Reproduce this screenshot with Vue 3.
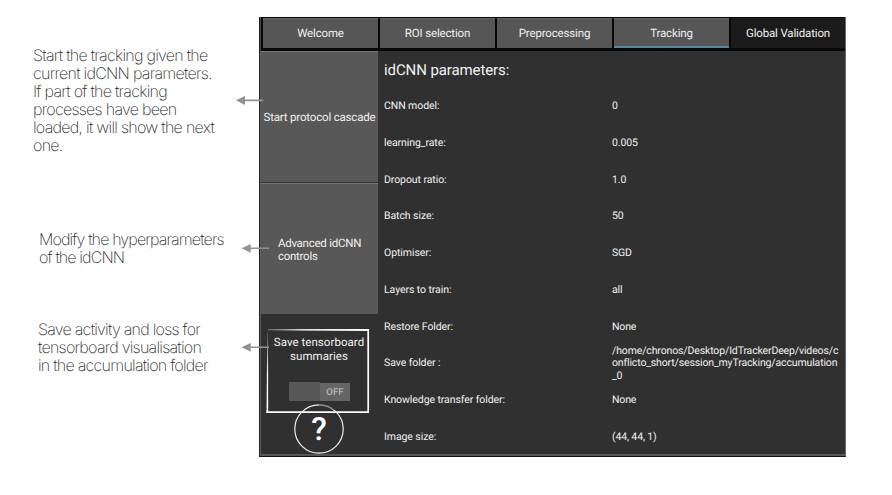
<script setup>
const notes = [
  { id: 'start', lines: ['Start the tracking given the', 'current idCNN parameters.', 'If part of the tracking', 'processes have been', 'loaded, it will show the next', 'one.'] },
  { id: 'modify', lines: ['Modify the hyperparameters', 'of the idCNN'] },
  { id: 'save', lines: ['Save activity and loss for', 'tensorboard visualisation', 'in the accumulation folder'] },
]
const tabs = [
  { label: 'Welcome' },
  { label: 'ROI selection' },
  { label: 'Preprocessing' },
  { label: 'Tracking', state: 'active' },
  { label: 'Global Validation', state: 'down' },
]
const params = [
  ['CNN model:', '0'],
  ['learning_rate:', '0.005'],
  ['Dropout ratio:', '1.0'],
  ['Batch size:', '50'],
  ['Optimiser:', 'SGD'],
  ['Layers to train:', 'all'],
  ['Restore Folder:', 'None'],
  ['Save folder :', '/home/chronos/Desktop/IdTrackerDeep/videos/c\nonflicto_short/session_myTracking/accumulation\n_0'],
  ['Knowledge transfer folder:', 'None'],
  ['Image size:', '(44, 44, 1)'],
]
</script>

<template>
  <div class="page">
    <aside class="notes">
      <p v-for="n in notes" :key="n.id" class="note" :class="n.id">
        <span v-for="l in n.lines" :key="l" class="line">{{ l }}</span>
      </p>
    </aside>

    <main class="window">
      <nav class="tabs">
        <div v-for="t in tabs" :key="t.label" class="tab" :class="t.state">{{ t.label }}</div>
      </nav>
      <div class="body">
        <div class="side">
          <div class="btn first"><span class="cascade">Start protocol cascade</span></div>
          <div class="btn second"><span>Advanced idCNN<br>controls</span></div>
          <div class="summary">
            <div class="caption">Save tensorboard<br>summaries</div>
            <div class="switch"><span class="knob"></span><span class="off">OFF</span></div>
            <svg class="frame" width="106" height="88" viewBox="0 0 106 88">
              <defs>
                <linearGradient id="top" x1="0" x2="1" y1="0" y2="0"><stop offset="0" stop-color="#777" /><stop offset=".35" stop-color="#fff" /></linearGradient>
                <linearGradient id="left" x1="0" x2="0" y1="0" y2="1"><stop offset="0" stop-color="#555" /><stop offset=".5" stop-color="#fff" /></linearGradient>
              </defs>
              <path d="M3 2.2 L104 2 V4 L3 3.2Z" fill="url(#top)" />
              <path d="M2.3 5 L3 5 L3.2 86 L1.5 86Z" fill="url(#left)" />
              <path d="M103.2 2V85.2H1.5" fill="none" stroke="#fff" stroke-width="1.7" />
            </svg>
          </div>
          <div class="help">
            <svg width="52" height="52" viewBox="0 0 52 52">
              <circle cx="26" cy="26" r="24.2" fill="none" stroke="#eee" stroke-width="1.2" />
              <path d="M26 1.8A24.2 24.2 0 0 1 41 7" fill="none" stroke="#303030" stroke-width="1.3" opacity=".55" />
            </svg>
            <span class="mark">?</span>
          </div>
        </div>
        <section class="params">
          <h1>idCNN parameters:</h1>
          <div v-for="p in params" :key="p[0]" class="row">
            <span>{{ p[0] }}</span><span class="value">{{ p[1] }}</span>
          </div>
        </section>
      </div>
    </main>

    <svg class="arrows" width="892" height="495" viewBox="0 0 892 495">
      <g fill="#929292" stroke="none">
        <path d="M236 100.3 245 96V99.6H263.3V101.2H245V105Z" />
        <path d="M241.5 248.3 250.7 244V247.5H269V249.1H250.7V252.7Z" />
        <path d="M241.5 347.3 250.7 343V346.5H269V348.1H250.7V351.7Z" />
      </g>
    </svg>
  </div>
</template>

<style>
body { margin: 0; background: #fff; }
</style>
<style scoped>
.page { position: relative; display: flex; width: 892px; height: 495px; overflow: hidden; background: #fff; text-rendering: geometricPrecision; }
.notes { width: 259px; flex: none; font-family: Inter, "Liberation Sans", sans-serif; font-weight: 200; font-size: 16px; line-height: 18px; color: #2a2a2a; }
.note { margin: 0; letter-spacing: -0.72px; white-space: nowrap; }
.line { display: block; }
.start { padding: 46px 0 0 33px; height: 108px; }
.modify { padding: 76px 0 0 39px; height: 36px; letter-spacing: -0.86px; }
.save { padding: 54px 0 0 38px; letter-spacing: -0.74px; }

.window { box-sizing: border-box; width: 587px; height: 440px; margin-top: 17px; display: flex; flex-direction: column; border-left: 1px solid #202020; border-right: 1px solid #6b6b6b; border-bottom: 1px solid #111; background: #303030; color: #f0f0f0; font-family: Roboto, sans-serif; }
.tabs { box-sizing: border-box; height: 34px; flex: none; display: flex; gap: 2px; padding: 1px 0 3px 2px; background: #080808; border-left: 1px solid #444; }
.tab { box-sizing: border-box; width: 115px; flex: none; display: flex; align-items: center; justify-content: center; background: #565656; border-top: 1px solid #686868; font-size: 11.5px; letter-spacing: -0.16px; padding-bottom: 2px; }
.tab.active { border-bottom: 2px solid #5189a3; padding-bottom: 0; }
.tab.down { background: #1b1b1b; border-top-color: #1b1b1b; width: 114px; }
.body { box-sizing: border-box; flex: 1; min-height: 0; display: flex; border-left: 1px solid #606060; border-bottom: 2px solid #555; }
.side { width: 117px; flex: none; display: flex; flex-direction: column; }
.btn { box-sizing: border-box; height: 131px; flex: none; display: flex; align-items: center; justify-content: center; background: #585858; border-top: 1px solid #747474; font-size: 11.5px; line-height: 13px; letter-spacing: -0.18px; white-space: nowrap; }
.first { border-bottom: 1px solid #343434; height: 132px; }
.second { padding-top: 2px; letter-spacing: -0.25px; }
.summary { position: relative; height: 106px; flex: none; padding-top: 21px; box-sizing: border-box; display: flex; flex-direction: column; align-items: center; }
.caption { font-size: 11.5px; line-height: 14px; letter-spacing: 0.05px; text-align: center; padding-right: 1px; }
.switch { display: flex; margin-top: 19px; width: 61px; height: 19px; align-items: flex-end; }
.knob { width: 31px; height: 19px; background: #585858; }
.off { width: 30px; height: 18px; background: #656565; color: #b5b5b5; font-size: 9.5px; font-weight: 500; line-height: 20px; text-align: center; letter-spacing: 0.1px; }
.frame { position: absolute; left: 4px; top: 13px; }
.help { position: relative; width: 52px; height: 52px; margin: -17px 0 0 32px; }
.help svg { display: block; }
.mark { position: absolute; left: 0; top: 0; width: 52px; text-align: center; font-size: 32px; line-height: 53px; font-weight: 500; color: #fff; }
.params { flex: 1; padding-left: 6px; }
h1 { margin: 0; height: 36.9px; font-size: 15px; line-height: 38px; font-weight: 400; letter-spacing: -0.1px; }
.row { display: grid; grid-template-columns: 228px 1fr; align-items: center; height: 36.75px; font-size: 10.5px; line-height: 12.3px; letter-spacing: -0.08px; white-space: pre; }
.value { letter-spacing: -0.14px; }
.arrows { position: absolute; left: 0; top: 0; pointer-events: none; }
</style>
